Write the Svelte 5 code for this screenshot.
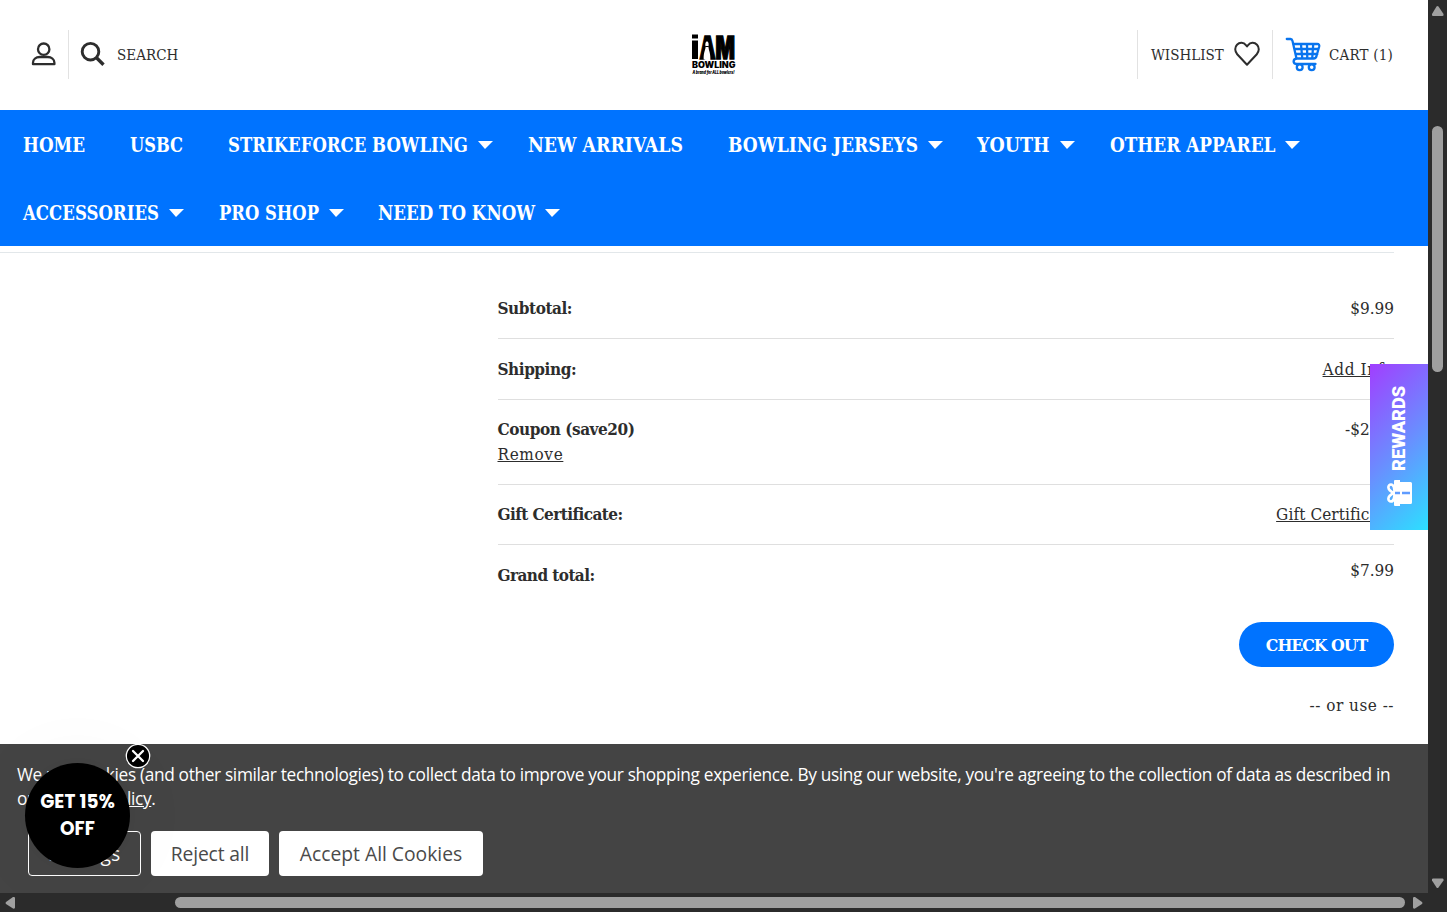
<script>
    let cookiesOpen = true;
    let promoOpen = true;

    const navRows = [
        [
            { label: 'HOME', width: 62 },
            { label: 'USBC', width: 53 },
            { label: 'STRIKEFORCE BOWLING', width: 240, menu: true },
            { label: 'NEW ARRIVALS', width: 155 },
            { label: 'BOWLING JERSEYS', width: 190, menu: true },
            { label: 'YOUTH', width: 72.5, menu: true },
            { label: 'OTHER APPAREL', width: 165.5, menu: true }
        ],
        [
            { label: 'ACCESSORIES', width: 136, menu: true },
            { label: 'PRO SHOP', width: 100, menu: true },
            { label: 'NEED TO KNOW', width: 157, menu: true }
        ]
    ];

    const totals = [
        { label: 'Subtotal:', value: '$9.99' },
        { label: 'Shipping:', value: 'Add Info', link: true },
        { label: 'Coupon (save20)', value: '-$2.00', remove: true },
        { label: 'Gift Certificate:', value: 'Gift Certificate', link: true },
        { label: 'Grand total:', value: '$7.99', grand: true }
    ];
</script>

<div class="window">
    <div class="page">
        <header>
            <div class="side">
                <a class="account" href="#account" aria-label="Account">
                    <svg width="26" height="26" viewBox="0 0 26 26" fill="none" stroke="#2d2d2d" stroke-width="2.3">
                        <circle cx="12.7" cy="8.2" r="5.7" />
                        <path d="M2 23.200V21.800C2 18.200 5 16 8.700 16h8c3.600 0 6.700 2.200 6.700 5.800v1.400z" stroke-linejoin="round" />
                    </svg>
                </a>
                <a class="search" href="#search">
                    <svg width="26" height="26" viewBox="0 0 26 26" fill="none" stroke="#2d2d2d">
                        <circle cx="10.5" cy="10.7" r="8.300" stroke-width="2.900" />
                        <path d="M16.500 16.700l7 7" stroke-width="3.400" />
                    </svg>
                    <span class="w61">SEARCH</span>
                </a>
            </div>

            <svg class="logo" width="50" height="48" viewBox="-1 -1.500 50 48" role="img" aria-label="I Am Bowling">
                <path d="M2 3h6v4H2zM2 9h6v18.500H2z" />
                <text x="9.500" y="27" font-size="32" font-weight="900" textLength="35.500" lengthAdjust="spacingAndGlyphs" stroke="#000" stroke-width="1.600">AM</text>
                <path d="M17 10c1.600 0 2 2.600 1.400 5.400 0 2.600 2.200 5 1.900 12.600h-6.600c-.3-7.600 1.900-10 1.900-12.600-.6-2.800-.2-5.400 1.400-5.400z" fill="#fff" />
                <path d="M15.200 15h3.600" stroke="#000" />
                <text x="2" y="36" font-size="8.500" font-weight="900" textLength="43.500" lengthAdjust="spacingAndGlyphs">BOWLING</text>
                <text x="2.500" y="42.500" font-size="4.300" font-weight="900" font-style="italic" textLength="42" lengthAdjust="spacingAndGlyphs">A brand for ALL bowlers!</text>
            </svg>

            <div class="side right">
                <a class="wishlist" href="#wishlist">
                    <span class="w73">WISHLIST</span>
                    <svg width="28" height="26" viewBox="0 0 28 26" fill="none" stroke="#2d2d2d" stroke-width="2">
                        <path d="M14 23.700L4.200 13.200C1.600 10.400 1.600 6.200 4 3.700c2.600-2.700 6.700-2.400 8.900.4L14 5.500l1.100-1.400c2.200-2.800 6.300-3.100 8.900-.4 2.400 2.500 2.400 6.700-.2 9.500z" stroke-linejoin="round" />
                    </svg>
                </a>
                <a class="cart" href="#cart">
                    <svg width="37" height="36" viewBox="0 0 37 36" fill="none" stroke="#0874ee" stroke-width="2.300" stroke-linecap="round" stroke-linejoin="round">
                        <path d="M1.800 3H5.500q1.500 0 2 2L11.500 22.500h17q2.500 0 3-2.500L34.200 10.500q.5-2.500-2-2.500H8M9.300 13h24M10.600 18h21.800M16 8.500l1.300 14M22 8.500l.3 14M28.200 8.500l-1 14M12 22.500c-4.500.5-4.500 5.500 0 5.500h18.500" />
                        <circle cx="14.700" cy="31.200" r="2.900" fill="#fff" />
                        <circle cx="26.700" cy="31.200" r="2.900" fill="#fff" />
                    </svg>
                    <span class="w65">CART (1)</span>
                </a>
            </div>
        </header>

        <nav>
            {#each navRows as row}
            <ul>
                {#each row as item}
                <li>
                    <svg class="label" width={item.width} height="24" role="img" aria-label={item.label}>
                        <text x="0" y="19.500" textLength={item.width} lengthAdjust="spacingAndGlyphs">{item.label}</text>
                    </svg>
                    {#if item.menu}<i class="caret"></i>{/if}
                </li>
                {/each}
            </ul>
            {/each}
        </nav>

        <main>
            <div class="totals">
                {#each totals as row}
                <div class="row" class:grand={row.grand}>
                    <div>
                        <strong>{row.label}</strong>
                        {#if row.remove}<a href="#remove">Remove</a>{/if}
                    </div>
                    {#if row.link}
                    <a href="#edit">{row.value}</a>
                    {:else}
                    <span>{row.value}</span>
                    {/if}
                </div>
                {/each}
            </div>
            <button class="checkout">CHECK OUT</button>
            <p class="or-use">-- or use --</p>
        </main>

        <button class="rewards">
            <svg width="26" height="26" viewBox="0 0 26 26" fill="#fff">
                <path d="M0 9q0-1 1-1h24q1 0 1 1v5H0zM2 13h22v11.500q0 1.500-1.500 1.500h-19Q2 26 2 24.500z" />
                <path d="M13 8.500C9 8.500 4.500 8 4.500 5S9.500 0 13 8c3.500-8 8.500-6 8.500-3s-4.500 3.500-8.500 3.500z" fill="none" stroke="#fff" stroke-width="2.600" />
                <path d="M13 9v5M13 16v8" stroke="#5f9cff" stroke-width="2.600" />
            </svg>
            <span>REWARDS</span>
        </button>

        {#if cookiesOpen}
        <section class="cookies">
            <p>
                <span class="line">We use cookies (and other similar technologies) to collect data to improve your shopping experience. By using our website, you're agreeing to the collection of data as described in</span>
                <span class="line">our <a href="#privacy">Privacy Policy</a>.</span>
            </p>
            <div class="actions">
                <button class="outline">Settings</button>
                <button class="reject" on:click={() => (cookiesOpen = false)}>Reject all</button>
                <button class="accept" on:click={() => (cookiesOpen = false)}>Accept All Cookies</button>
            </div>
        </section>
        {/if}

        {#if promoOpen}
        <div class="promo">
            <span>GET 15%</span>
            <span>OFF</span>
            <button aria-label="Close" on:click={() => (promoOpen = false)}>
                <svg width="26" height="26" viewBox="0 0 26 26">
                    <circle cx="13" cy="13" r="11.700" fill="#000" stroke="#fff" stroke-width="1.300" />
                    <path d="M8 8l10 10M18 8L8 18" stroke="#fff" stroke-width="2.300" stroke-linecap="round" />
                </svg>
            </button>
        </div>
        {/if}
    </div>

    <div class="vbar">
        <svg width="19" height="20"><path d="M10.500 6.500l5 7.500q.5 2-1 2h-9.500q-1.500 0-1-2l4.500-7.500q1-1.200 2 0z" /></svg>
        <div class="thumb"></div>
        <svg width="19" height="20"><path d="M10.500 14.500l5-7q.5-2-1-2h-9.500q-1.500 0-1 2l4.500 7q1 1.200 2 0z" /></svg>
    </div>
    <div class="hbar">
        <svg width="20" height="19"><path d="M6 9l7-5q2-.5 2 1v9.500q0 1.500-2 1l-7-4.500q-1-1 0-2z" /></svg>
        <div class="thumb"></div>
        <svg width="20" height="19"><path d="M14 9L7 4q-2-.5-2 1v9.500q0 1.500 2 1l7-4.500q1-1 0-2z" /></svg>
    </div>
</div>

<style>
    :global(body) {
        margin: 0;
        overflow: hidden;
    }

    .window {
        display: grid;
        grid-template-columns: 1428px 19px;
        grid-template-rows: 893px 19px;
        width: 1447px;
        height: 912px;
        background: #2b2b2b;
    }

    .page {
        position: relative;
        overflow: hidden;
        background: #fff;
        color: #2d2d2d;
        font-family: "Roboto Slab", "DejaVu Serif Condensed", "DejaVu Serif", serif;
    }

    svg {
        display: block;
        flex: none;
    }

    a {
        color: inherit;
    }

    button {
        border: none;
        padding: 0;
        cursor: pointer;
        font-family: inherit;
    }

    header {
        display: flex;
        align-items: center;
        justify-content: space-between;
        height: 110px;
        padding: 0 34px 2px 31px;
        box-sizing: border-box;
    }

    header a {
        display: flex;
        align-items: center;
        height: 49px;
        text-decoration: none;
        font-size: 15px;
        font-weight: 400;
        white-space: nowrap;
    }

    header span {
        padding-top: 1px;
    }

    .side {
        display: flex;
        width: 260px;
    }

    .right {
        justify-content: flex-end;
        width: 257px;
    }

    .account {
        width: 37px;
        border-right: 1px solid #e2e2e2;
    }

    .search {
        gap: 11px;
        padding-left: 11px;
    }

    .w61 {
        width: 61px;
        letter-spacing: 0.05px;
    }

    .w73 {
        width: 73px;
        letter-spacing: 0;
    }

    .w65 {
        width: 65px;
        letter-spacing: 0.2px;
    }

    .wishlist {
        gap: 9px;
        padding: 0 11px 0 13px;
        border-left: 1px solid #e2e2e2;
    }

    .cart {
        gap: 7px;
        padding-left: 12px;
        border-left: 1px solid #e2e2e2;
    }

    .logo {
        overflow: visible;
        font-family: Inter, "Open Sans", sans-serif;
    }

    nav {
        height: 136px;
        background: #0073ff;
    }

    ul {
        display: flex;
        gap: 45px;
        height: 68px;
        margin: 0;
        padding: 0 23px;
        list-style: none;
    }

    li {
        display: flex;
        align-items: center;
    }

    .label {
        overflow: visible;
        font-size: 19.8px;
        font-weight: bold;
        fill: #fff;
    }

    .caret {
        margin: 2px -10.3px 0 10px;
        border: 7.5px solid transparent;
        border-top: 8px solid #fff;
        border-bottom: 0;
        border-right-width: 8px;
    }

    main {
        display: flex;
        flex-direction: column;
        align-items: flex-end;
        height: 498px;
        margin: 6px 34px 0 0;
        border-top: 1px solid #e2e7ea;
        font-size: 17px;
    }

    .totals {
        width: 896.5px;
        padding-top: 25px;
    }

    .row {
        display: flex;
        justify-content: space-between;
        box-sizing: border-box;
        height: 60px;
        padding-top: 18px;
        border-bottom: 1px solid #dfdfdf;
        line-height: 25px;
    }

    .row:nth-child(1),
    .row:nth-child(2) {
        height: 61px;
    }

    .row:nth-child(3) {
        height: 85px;
        padding-top: 17px;
    }

    .row:nth-child(4) {
        padding-top: 17px;
    }

    .row strong {
        display: block;
        letter-spacing: -0.45px;
    }

    .row:nth-child(4) strong,
    .row:nth-child(5) strong {
        letter-spacing: -0.57px;
    }

    .row a {
        letter-spacing: 0.65px;
    }

    .row:nth-child(4) a {
        letter-spacing: 0.1px;
    }

    .row.grand {
        border-bottom: none;
    }

    .row.grand > span {
        margin-top: -5px;
    }

    .checkout {
        width: 155px;
        height: 45px;
        margin-top: 17px;
        border-radius: 23px;
        background: #0073ff;
        color: #fff;
        font-size: 17.5px;
        font-weight: bold;
        letter-spacing: -1px;
    }

    .or-use {
        margin: 26px 0 0;
        line-height: 25px;
        letter-spacing: 0.5px;
    }

    .rewards {
        position: absolute;
        top: 364px;
        right: 0;
        display: flex;
        flex-direction: column;
        gap: 8px;
        width: 58px;
        height: 166px;
        padding: 21px 0 0 16px;
        box-sizing: border-box;
        justify-content: flex-start;
        align-items: flex-start;
        background: linear-gradient(135deg, #a13eff 0%, #6b8cff 50%, #2ce0ff 100%);
        color: #fff;
    }

    .rewards span {
        order: -1;
        writing-mode: vertical-rl;
        transform: rotate(180deg);
        height: 87px;
        font: 900 18.3px/25px Roboto, sans-serif;
        white-space: nowrap;
    }

    .rewards svg {
        transform: rotate(-90deg);
    }

    .cookies {
        position: absolute;
        left: 0;
        right: 0;
        bottom: 0;
        height: 149px;
        padding: 19px 17px 0;
        box-sizing: border-box;
        background: #444;
        color: #fff;
        font-family: "Segoe UI", "Open Sans", sans-serif;
    }

    .cookies p {
        margin: 0;
        font-size: 17.3px;
        line-height: 24px;
    }

    .line {
        display: block;
        letter-spacing: -0.343px;
        white-space: nowrap;
    }

    .actions {
        display: flex;
        gap: 10px;
        margin: 20px 0 0 11px;
    }

    .actions button {
        height: 45px;
        border-radius: 4px;
        background: #fff;
        color: #4a4a4a;
        font-size: 19.3px;
        white-space: nowrap;
    }

    .actions .outline {
        width: 113px;
        border: 1px solid #fff;
        background: transparent;
        color: #fff;
    }

    .actions .reject {
        width: 118px;
        letter-spacing: -0.15px;
    }

    .accept {
        width: 204px;
    }

    .promo {
        position: absolute;
        left: 25px;
        top: 763px;
        display: flex;
        flex-direction: column;
        align-items: center;
        justify-content: center;
        width: 105px;
        height: 105px;
        padding-bottom: 1px;
        box-sizing: border-box;
        border-radius: 50%;
        background: #000;
        color: #fff;
        font: 700 18.5px/27px Poppins, Inter, sans-serif;
        letter-spacing: 0.1px;
        white-space: nowrap;
        box-shadow: 0 0 80px rgba(0, 0, 0, 0.05);
    }

    .promo button {
        position: absolute;
        left: 99.5px;
        top: -20.5px;
        background: none;
    }

    .vbar path,
    .hbar path {
        fill: #a0a0a0;
    }

    .vbar {
        display: flex;
        flex-direction: column;
        align-items: center;
        height: 893px;
    }

    .vbar .thumb {
        width: 11px;
        height: 246px;
        margin: 106px 0 auto;
        border-radius: 6px;
        background: #9f9f9f;
    }

    .hbar {
        grid-column: 1 / 3;
        display: flex;
        align-items: center;
        width: 1428px;
    }

    .hbar .thumb {
        width: 1230px;
        height: 11px;
        margin: 0 auto 0 155px;
        border-radius: 6px;
        background: #9f9f9f;
    }
</style>
